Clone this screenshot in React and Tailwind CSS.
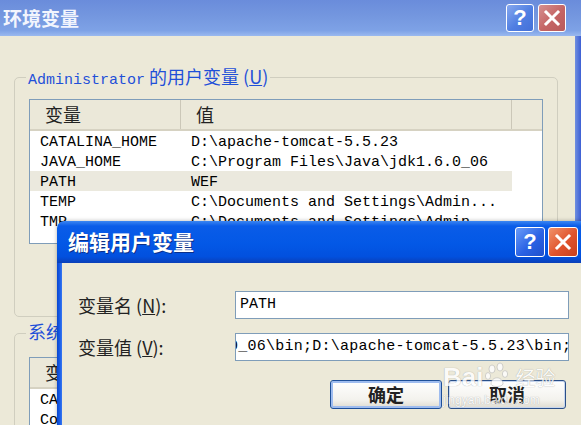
const MONO = "font-['Liberation_Mono','Noto_Sans_CJK_SC',monospace]"
const CJK = "font-['Noto_Sans_CJK_SC',sans-serif]"

const userVars = [
  ['CATALINA_HOME', 'D:\\apache-tomcat-5.5.23'],
  ['JAVA_HOME', 'C:\\Program Files\\Java\\jdk1.6.0_06'],
  ['PATH', 'WEF'],
  ['TEMP', 'C:\\Documents and Settings\\Admin...'],
  ['TMP', 'C:\\Documents and Settings\\Admin...'],
]

const sysVars = [
  ['CATALINA_HOME', 'D:\\apache-tomcat-5.5.23'],
  ['ComSpec', 'C:\\WINDOWS\\system32\\cmd.exe'],
]

function HelpBtn({ active }) {
  return (
    <div className={`flex items-center justify-center rounded-[3px] border border-white ${active ? 'w-[30px] h-[30px] bg-[linear-gradient(135deg,#6a9cf8,#2a62e4_55%,#1f50cc)]' : 'w-[28px] h-[28px] bg-[linear-gradient(135deg,#86a8ee,#4f7ee2_55%,#4470d8)] border-[#dbe6fb]'}`}>
      <span className="font-['Liberation_Sans',sans-serif] font-bold text-white text-[22px] leading-none">?</span>
    </div>
  )
}

function CloseBtn({ active }) {
  return (
    <div className={`flex items-center justify-center rounded-[3px] border border-white ${active ? 'w-[30px] h-[30px] bg-[linear-gradient(135deg,#f0926a,#e0532c_55%,#c8401e)]' : 'w-[28px] h-[28px] bg-[linear-gradient(135deg,#d69090,#c46464_55%,#b85a5a)] border-[#f1dada]'}`}>
      <svg width="18" height="18" viewBox="0 0 18 18">
        <path d="M3 3 L15 15 M15 3 L3 15" stroke="white" strokeWidth="3" strokeLinecap="square" />
      </svg>
    </div>
  )
}

function ListView({ rows, height, highlight }) {
  return (
    <div className={`ml-[14px] w-[514px] border border-[#7f9db9] bg-white overflow-hidden ${height}`}>
      <div className={`flex h-[31px] bg-[#ebe8d9] border-b-2 border-[#d6d2c2] ${CJK} text-[18px] text-[#222]`}>
        <div className="w-[151px] pl-[15px] flex items-center border-r border-[#cbc7b8]">变量</div>
        <div className="w-[331px] pl-[15px] flex items-center border-r border-[#cbc7b8]">值</div>
        <div className="flex-1" />
      </div>
      {rows.map(([name, value], i) => (
        <div key={i} className={`flex h-[20px] ${MONO} text-[15px] text-black`}>
          <div className={`flex w-[482px] h-full items-center pt-[4px] ${i === highlight ? 'bg-[#ebe9de]' : ''}`}>
            <div className="w-[151px] pl-[10px] whitespace-nowrap">{name}</div>
            <div className="pl-[10px] whitespace-nowrap">{value}</div>
          </div>
        </div>
      ))}
    </div>
  )
}

export default function App() {
  return (
    <div className="relative w-[581px] h-[425px] overflow-hidden bg-[#ECE9D8] flex flex-col">
      {/* back window title */}
      <div className="shrink-0 h-[36px] flex items-center pl-[3px] pr-[15px] bg-[linear-gradient(#6a8cdb,#7497df_45%,#7ea2e6_85%,#9ab9ef)]">
        <span className={`${CJK} font-bold text-[19px] text-[#f2f5fd]`}>环境变量</span>
        <div className="ml-auto flex gap-[4px]">
          <HelpBtn />
          <CloseBtn />
        </div>
      </div>

      <div className="flex-1 min-h-0 flex overflow-hidden">
        <div className="flex-1">
          {/* user variables */}
          <div className="relative mt-[41px] ml-[14px] w-[544px] h-[240px] border border-[#d0cebf] rounded-[5px]">
            <span className="absolute -top-[15px] left-[11px] px-[2px] bg-[#ECE9D8] text-[#1f50d8] whitespace-nowrap">
              <span className={`${MONO} text-[15px]`}>Administrator</span>
              <span className={`${CJK} text-[18px]`}> 的用户变量 (<span className="underline">U</span>)</span>
            </span>
            <div className="mt-[21px]">
              <ListView rows={userVars} height="h-[145px]" highlight={2} />
            </div>
          </div>

          {/* system variables */}
          <div className="relative mt-[16px] ml-[14px] w-[544px] h-[200px] border border-[#d0cebf] rounded-[5px]">
            <span className={`absolute -top-[16px] left-[11px] px-[2px] bg-[#ECE9D8] text-[#1f50d8] ${CJK} text-[18px] whitespace-nowrap`}>
              系统变量 (<span className="underline">S</span>)
            </span>
            <div className="mt-[23px]">
              <ListView rows={sysVars} height="h-[120px]" />
            </div>
          </div>
        </div>
        <div className="w-[6px] bg-[linear-gradient(90deg,#6f8fe0,#3d5fd4)]" />
      </div>

      {/* edit dialog */}
      <div className="absolute left-[57px] top-[221px] w-[526px] h-[210px] flex flex-col shadow-[0_0_4px_rgba(0,0,0,0.3)]">
        <div className="shrink-0 h-[42px] rounded-tl-[7px] flex items-center pl-[11px] pr-[5px] bg-[linear-gradient(#3b86f2,#0a5ce8_12%,#0358e6_55%,#0250de_85%,#0a3fb8)]">
          <span className={`${CJK} font-bold text-[21px] text-white [text-shadow:1px_1px_0_#0a2f8a]`}>编辑用户变量</span>
          <div className="ml-auto flex gap-[3px]">
            <HelpBtn active />
            <CloseBtn active />
          </div>
        </div>
        <div className="flex-1 min-h-0 flex">
          <div className="w-[5px] bg-[linear-gradient(90deg,#0846d0,#1a5ee8_60%,#3a78f0)]" />
          <div className="flex-1 bg-[#ECE9D8] pt-[28px] pl-[16px]">
            <div className="flex items-center">
              <div className={`w-[157px] ${CJK} text-[18px] text-[#222]`}>变量名 (<span className="underline">N</span>):</div>
              <div className={`w-[334px] h-[28px] border border-[#7f9db9] bg-white flex items-center pl-[4px] ${MONO} text-[15px] text-black`}>PATH</div>
            </div>
            <div className="flex items-center mt-[14px]">
              <div className={`w-[157px] ${CJK} text-[18px] text-[#222]`}>变量值 (<span className="underline">V</span>):</div>
              <div className={`w-[334px] h-[28px] border border-[#7f9db9] bg-white flex items-center overflow-hidden ${MONO} text-[15px] tracking-[0.25px] text-black`}>
                <span className="-ml-[7px] whitespace-nowrap">0_06\bin;D:\apache-tomcat-5.5.23\bin;C:</span>
              </div>
            </div>
            <div className="flex gap-[6px] mt-[19px] ml-[252px]">
              <div className={`w-[112px] h-[29px] rounded-[3px] border border-[#1d4f99] bg-[linear-gradient(#ffffff,#f3f2ed_70%,#dedbd0)] shadow-[inset_0_0_0_2px_#9ebcef] flex items-center justify-center ${CJK} font-bold text-[18px] text-[#222]`}>确定</div>
              <div className={`w-[118px] h-[29px] rounded-[3px] border border-[#2a4f88] bg-[linear-gradient(#ffffff,#f3f2ed_70%,#dedbd0)] shadow-[inset_0_0_0_1px_#c7d6ee] flex items-center justify-center ${CJK} font-bold text-[18px] text-[#222]`}>取消</div>
            </div>
          </div>
        </div>
      </div>

      {/* watermark */}
      <div className="absolute left-[443px] top-[362px] flex flex-col items-start opacity-80 pointer-events-none">
        <div className="flex items-end">
          <span className="font-['Liberation_Sans',sans-serif] font-bold text-[26px] leading-none text-white [text-shadow:0_0_1px_#888]">Bai</span>
          <svg width="32" height="26" viewBox="0 0 32 26" className="mb-[2px]">
            <g fill="white" stroke="#aaa" strokeWidth="0.6">
              <ellipse cx="9" cy="7" rx="3" ry="4" />
              <ellipse cx="17" cy="5" rx="3" ry="4" />
              <ellipse cx="5" cy="14" rx="2.6" ry="3.4" />
              <ellipse cx="22" cy="12" rx="2.6" ry="3.4" />
              <path d="M8 22 C8 15 18 13 20 21 C21 25 9 26 8 22 Z" />
            </g>
          </svg>
          <span className={`${CJK} text-[20px] leading-none text-white mb-[2px] [text-shadow:0_0_1px_#888]`}>经验</span>
        </div>
        <span className="font-['Liberation_Sans',sans-serif] text-[12px] leading-none mt-[4px] text-white [text-shadow:0_0_1px_#888]">jingyan.baidu.com</span>
      </div>
    </div>
  )
}
